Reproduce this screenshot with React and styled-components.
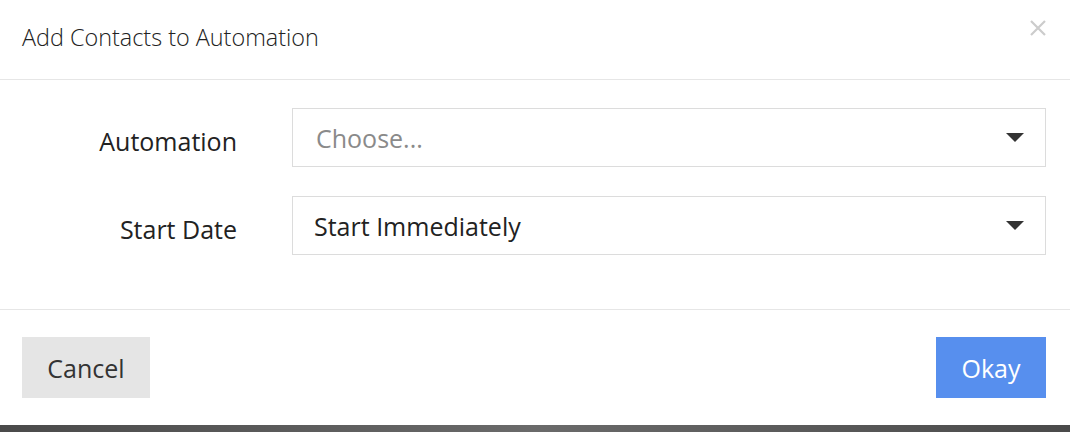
import React from 'react'
import styled, { createGlobalStyle } from 'styled-components'

const GlobalStyle = createGlobalStyle`
  html, body {
    margin: 0;
    padding: 0;
    background: linear-gradient(to right, #4a4a4a, #6a6a6a 50%, #4a4a4a);
    font-family: "Open Sans", "Noto Sans", sans-serif;
  }
`

const Modal = styled.div`
  width: 1070px;
  height: 425px;
  background: #fff;
  display: flex;
  flex-direction: column;
  box-shadow: 0 2px 6px rgba(0, 0, 0, 0.5);
`

const Header = styled.div`
  height: 80px;
  box-sizing: border-box;
  border-bottom: 1px solid #e6e6e6;
  display: flex;
  align-items: center;
  justify-content: space-between;
  padding: 0 24px 6px 22px;
`

const Title = styled.h1`
  margin: 0;
  font-size: 23.4px;
  font-weight: 300;
  color: #222;
`

const Close = styled.button`
  align-self: flex-start;
  border: 0;
  background: none;
  padding: 0;
  margin-top: 20px;
  width: 16px;
  height: 16px;
  cursor: pointer;
  display: flex;
`

const Body = styled.div`
  display: grid;
  grid-template-columns: 215px 1fr;
  column-gap: 55px;
  row-gap: 29px;
  padding: 28px 24px 54px 22px;
  border-bottom: 1px solid #e6e6e6;
`

const Label = styled.label`
  display: flex;
  align-items: center;
  justify-content: flex-end;
  font-size: 25px;
  color: #222;
  padding-top: 6px;
`

const Select = styled.div`
  height: 59px;
  box-sizing: border-box;
  border: 1px solid #dcdcdc;
  display: flex;
  align-items: center;
  justify-content: space-between;
  padding: 0 21px 0 21px;
  font-size: 25px;
  color: ${props => (props.placeholder ? '#8a8a8a' : '#222')};
`

const Placeholder = styled.span`
  padding-left: 2px;
`

const Arrow = styled.span`
  width: 0;
  height: 0;
  border-left: 9px solid transparent;
  border-right: 9px solid transparent;
  border-top: 9px solid #333;
`

const Footer = styled.div`
  flex: 1;
  display: flex;
  justify-content: space-between;
  align-items: flex-start;
  padding: 27px 24px 0 22px;
`

const Button = styled.button`
  height: 61px;
  border: 0;
  font-family: inherit;
  font-size: 25px;
  padding: 0;
  width: ${props => props.w}px;
  background: ${props => (props.primary ? '#578fee' : '#e5e5e5')};
  color: ${props => (props.primary ? '#fff' : '#333')};
  cursor: pointer;
`

const App = () => {
  return (
    <>
      <GlobalStyle />
      <Modal>
        <Header>
          <Title>Add Contacts to Automation</Title>
          <Close aria-label="Close">
            <svg width="16" height="16" viewBox="0 0 16 16">
              <path d="M1 1L15 15M15 1L1 15" stroke="#cccccc" strokeWidth="2.2" />
            </svg>
          </Close>
        </Header>
        <Body>
          <Label>Automation</Label>
          <Select placeholder>
            <Placeholder>Choose...</Placeholder>
            <Arrow />
          </Select>
          <Label>Start Date</Label>
          <Select>
            Start Immediately
            <Arrow />
          </Select>
        </Body>
        <Footer>
          <Button w={128}>Cancel</Button>
          <Button primary w={110}>Okay</Button>
        </Footer>
      </Modal>
    </>
  )
}

export default App
